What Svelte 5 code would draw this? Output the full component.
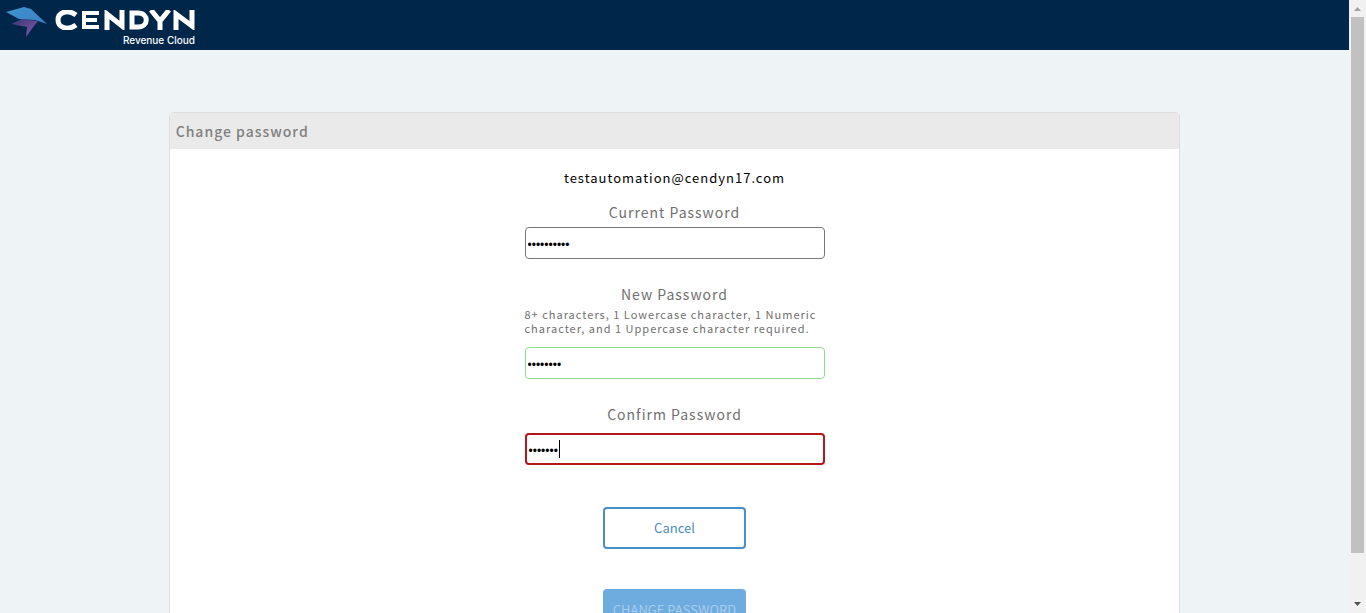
<script>
  let current = $state('Password17');
  let next = $state('Secret17');
  let confirm = $state('Secret1');
  let mismatch = $derived(next !== confirm);
</script>

<div class="window">
  <div class="page">
    <header>
      <a class="brand" href="#home" aria-label="Cendyn Revenue Cloud">
        <svg class="mark" width="42" height="32" viewBox="0 0 42 32" aria-hidden="true">
          <defs>
            <linearGradient id="wing" x1="0" y1="0" x2="1" y2="1">
              <stop offset="0" stop-color="#3c96d2" />
              <stop offset="1" stop-color="#3f7cc0" />
            </linearGradient>
            <linearGradient id="tail" x1="0" y1="0" x2="1" y2="1">
              <stop offset="0" stop-color="#35346f" />
              <stop offset="1" stop-color="#8a5cb0" />
            </linearGradient>
          </defs>
          <path d="M5 17 L16 12 L32 14 L28 19 L20 30 L21 20 Z" fill="url(#tail)" />
          <path d="M0 5 L18 0 L25 2 L41 17 L29 13 L13 12 Z" fill="url(#wing)" />
        </svg>
        <span class="words">
          <svg class="name" width="140" height="20" viewBox="0 0 140 20" aria-hidden="true">
            <g fill="none" stroke="#fff" stroke-width="5">
              <path d="M21 5 C13 -1 3 2 3 10 S13 21 21 15" />
              <path d="M44 3 H29 V17 H44 M29 10 H42" stroke-width="4" />
              <path d="M52 20 V4 L67 16 V0" />
              <path d="M77 3 H83 C94 3 94 17 83 17 H77 Z" />
              <path d="M96 0 L105 11 L114 0 M105 11 V20" />
              <path d="M121 20 V4 L137 16 V0" />
            </g>
          </svg>
          <span class="sub">Revenue Cloud</span>
        </span>
      </a>
    </header>

    <main>
      <h1>Change password</h1>
      <form onsubmit={(e) => e.preventDefault()}>
        <p class="email">testautomation@cendyn17.com</p>

        <div class="field">
          <label for="current">Current Password</label>
          <input id="current" type="password" bind:value={current} />
        </div>

        <div class="field">
          <label for="next">New Password</label>
          <p class="hint" id="rules">8+ characters, 1 Lowercase character, 1 Numeric character, and 1 Uppercase character required.</p>
          <input id="next" class="valid" type="password" aria-describedby="rules" bind:value={next} />
        </div>

        <div class="field last">
          <label for="confirm">Confirm Password</label>
          <div class="entry">
            <input id="confirm" class:invalid={mismatch} type="password" bind:value={confirm} />
            <span class="caret" aria-hidden="true"></span>
          </div>
        </div>

        <button class="cancel" type="button">Cancel</button>
        <button class="submit" type="submit" disabled={mismatch}>CHANGE PASSWORD</button>
      </form>
    </main>
  </div>

  <div class="scrollbar" aria-hidden="true">
    <svg width="17" height="17" viewBox="0 0 17 17"><path d="M5 11 L8.500 7 L12 11 Z" fill="#a3a3a3" /></svg>
    <div class="track"><div class="thumb"></div></div>
    <svg width="17" height="17" viewBox="0 0 17 17"><path d="M5 6 L12 6 L8.500 10 Z" fill="#505050" /></svg>
  </div>
</div>

<style>
  :global(body) {
    margin: 0;
  }
  .window {
    display: grid;
    grid-template-columns: 1fr 17px;
    height: 100vh;
    overflow: hidden;
    background: #eef3f6;
    font-family: "Noto Sans CJK SC", "Open Sans", sans-serif;
    letter-spacing: 1px;
  }
  .page {
    overflow: hidden;
  }
  header {
    height: 50px;
    background: #00264a;
  }
  .brand {
    display: inline-flex;
    gap: 7px;
    padding: 7px 6px 0;
    color: #fff;
    text-decoration: none;
  }
  .words {
    display: flex;
    flex-direction: column;
    align-items: flex-end;
    padding-top: 3px;
  }
  .sub {
    margin-top: 3px;
    font: 500 10px/14px Inter, sans-serif;
    letter-spacing: 0;
  }
  main {
    box-sizing: border-box;
    width: 75%;
    margin: 62px auto 40px;
    border: 1px solid #dcdddf;
    border-radius: 5px;
    overflow: hidden;
    background: #fff;
  }
  h1 {
    margin: 0;
    padding: 0 6px;
    background: #eaeaea;
    color: #808080;
    font-size: 14px;
    font-weight: 500;
    line-height: 36px;
  }
  form {
    display: flex;
    flex-direction: column;
    align-items: center;
    padding: 18px 0 40px;
  }
  .email {
    margin: 0 0 12px;
    color: #000;
    font-size: 13px;
    line-height: 22px;
  }
  .field {
    display: flex;
    flex-direction: column;
    width: 300px;
    margin-bottom: 24px;
  }
  label {
    margin-bottom: 4px;
    color: #707070;
    font-size: 14px;
    line-height: 22px;
    text-align: center;
  }
  .hint {
    margin: -2px 0 12px;
    color: #707070;
    font-size: 11px;
    line-height: 14px;
  }
  input {
    box-sizing: border-box;
    width: 100%;
    height: 32px;
    padding: 4px 2px 1px;
    border: 1px solid #767676;
    border-radius: 4px;
    outline: 0;
    background: #fff;
    color: #000;
    font: 12px "Liberation Sans", sans-serif;
  }
  .valid {
    border-color: #90dc90;
  }
  .invalid {
    border: 2px solid #b3161b;
  }
  .entry {
    position: relative;
    margin-top: 4px;
  }
  .caret {
    position: absolute;
    top: 7px;
    left: 34px;
    width: 1px;
    height: 18px;
    background: #000;
  }
  .last {
    margin-bottom: 42px;
  }
  button {
    width: 143px;
    height: 42px;
    padding: 0 0 2px;
    border: 2px solid #4a90c8;
    border-radius: 4px;
    background: #fff;
    color: #4a8cc0;
    font: 13px "Noto Sans CJK SC", "Open Sans", sans-serif;
    white-space: nowrap;
  }
  .submit {
    margin-top: 40px;
    border-color: #6eabdf;
    background: #6eabdf;
    color: #a9cdec;
  }
  .scrollbar {
    display: flex;
    flex-direction: column;
    background: #f1f1f1;
  }
  .track {
    flex: 1;
    padding: 0 2px;
  }
  .thumb {
    height: 92.5%;
    background: #c1c1c1;
  }
</style>
